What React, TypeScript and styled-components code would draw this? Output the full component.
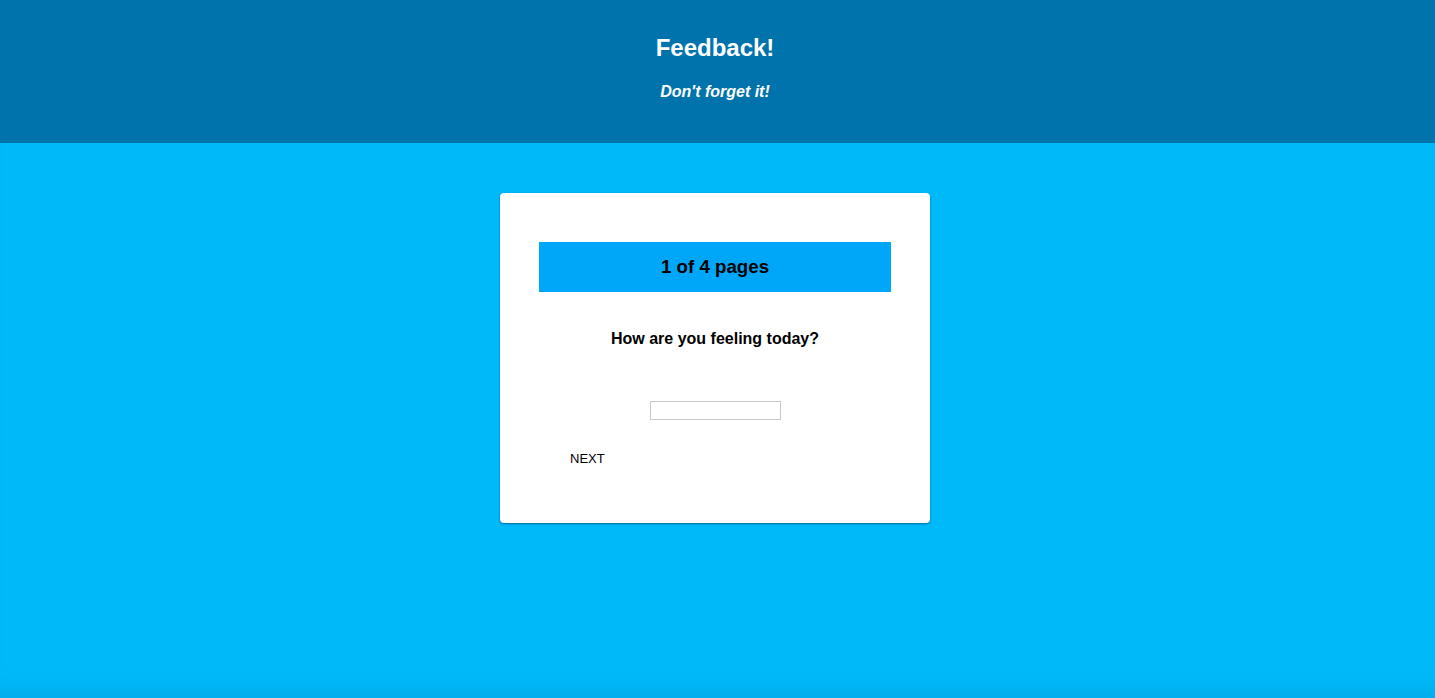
import React from "react";
import styled, { createGlobalStyle } from "styled-components";

const Global = createGlobalStyle`
  html, body { margin: 0; padding: 0; height: 100%; }
  body {
    font-family: "Liberation Sans", Arial, Helvetica, sans-serif;
    background: #00b9f9;
  }
  #root { min-height: 100%; display: flex; flex-direction: column; }
`;

const Page = styled.div`
  display: flex;
  flex-direction: column;
  min-height: 698px;
  flex: 1;
`;

const Header = styled.header`
  height: 143px;
  box-sizing: border-box;
  background: #0073ac;
  color: #fff;
  display: flex;
  flex-direction: column;
  align-items: center;
  padding: 34px 5px 0 0;
`;

const Title = styled.h1`
  margin: 0;
  font-size: 24px;
  line-height: 28px;
  font-weight: bold;
`;

const Subtitle = styled.p`
  margin: 21px 0 0;
  font-size: 16px;
  line-height: 18px;
  font-weight: bold;
  font-style: italic;
`;

const Main = styled.main`
  flex: 1;
  background: #00b9f9;
  display: flex;
  justify-content: center;
  align-items: flex-start;
  padding: 50px 5px 0 0;
  box-shadow: inset 0 -22px 24px -18px rgba(0, 40, 80, 0.12);
`;

const Card = styled.section`
  width: 430px;
  box-sizing: border-box;
  background: #fff;
  border-radius: 4px;
  box-shadow: 0 1px 2px rgba(0, 40, 70, 0.55);
  padding: 49px 39px 55px;
  display: flex;
  flex-direction: column;
`;

const Progress = styled.div`
  height: 50px;
  background: #00a7f8;
  display: flex;
  align-items: center;
  justify-content: center;
  font-size: 18.72px;
  font-weight: bold;
  color: #000;
`;

const Question = styled.p`
  margin: 38px 0 0;
  text-align: center;
  font-size: 16px;
  line-height: 18px;
  font-weight: bold;
  color: #000;
`;

const InputRow = styled.div`
  margin-top: 53px;
  display: flex;
  justify-content: center;
`;

const Field = styled.input`
  width: 131px;
  height: 19px;
  box-sizing: border-box;
  border: 1px solid #c8c8c8;
  padding: 0 4px;
  margin: 0;
  outline: none;
  font-family: inherit;
`;

const Actions = styled.div`
  margin-top: 30px;
  display: flex;
`;

const NextButton = styled.button`
  margin-left: 31px;
  background: none;
  border: none;
  padding: 0;
  height: 18px;
  font-family: "Liberation Sans", Arial, sans-serif;
  font-size: 13px;
  line-height: 18px;
  color: #000;
  cursor: pointer;
`;

export default function App() {
  return (
    <>
      <Global />
      <Page>
        <Header>
          <Title>Feedback!</Title>
          <Subtitle>Don't forget it!</Subtitle>
        </Header>
        <Main>
          <Card>
            <Progress>1 of 4 pages</Progress>
            <Question>How are you feeling today?</Question>
            <InputRow>
              <Field type="text" />
            </InputRow>
            <Actions>
              <NextButton>NEXT</NextButton>
            </Actions>
          </Card>
        </Main>
      </Page>
    </>
  );
}
